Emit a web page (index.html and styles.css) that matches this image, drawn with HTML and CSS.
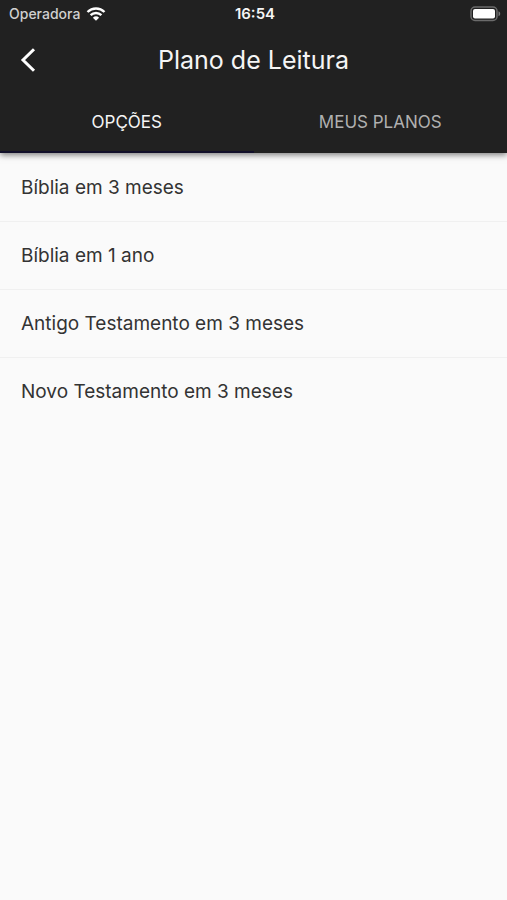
FILE: index.html
```html
<!DOCTYPE html>
<html lang="pt-BR">
<head>
<meta charset="utf-8">
<meta name="viewport" content="width=device-width, initial-scale=1">
<title>Plano de Leitura</title>
<link rel="stylesheet" href="styles.css">
</head>
<body>
<header class="header">
  <div class="status">
    <div class="carrier">
      <span>Operadora</span>
      <svg class="wifi" viewBox="0 0 20 14" aria-hidden="true">
        <path d="M1.500 5a12.200 12.200 0 0 1 17 0M4.600 8.200a7.700 7.700 0 0 1 10.800 0" fill="none" stroke="currentColor" stroke-width="2.400"/>
        <path d="M10 13.800 6.900 10.700a4.500 4.500 0 0 1 6.200 0z" fill="currentColor"/>
      </svg>
    </div>
    <time class="time">16:54</time>
    <svg class="battery" viewBox="0 0 31 16" aria-hidden="true">
      <rect x="1" y="1" width="26" height="13.500" rx="4" fill="none" stroke="#6b6b6b" stroke-width="1.500"/>
      <rect x="3" y="3" width="22" height="9.500" rx="2" fill="#fff"/>
      <path d="M28.500 5.300c2.300.9 2.300 4 0 4.900z" fill="#7a7a7a"/>
    </svg>
  </div>
  <div class="toolbar">
    <button class="back" type="button" aria-label="Voltar">
      <svg viewBox="0 0 16 24" aria-hidden="true"><path d="M14 1.200 3 12l11 10.800" fill="none" stroke="currentColor" stroke-width="3"/></svg>
    </button>
    <h1 class="title">Plano de Leitura</h1>
  </div>
  <nav class="tabs">
    <button class="tab active" type="button">OPÇÕES</button>
    <button class="tab" type="button">MEUS PLANOS</button>
  </nav>
</header>
<main>
  <ul class="plans">
    <li><a href="#">Bíblia em 3 meses</a></li>
    <li><a href="#">Bíblia em 1 ano</a></li>
    <li><a href="#">Antigo Testamento em 3 meses</a></li>
    <li><a href="#">Novo Testamento em 3 meses</a></li>
  </ul>
</main>
</body>
</html>
```
FILE: styles.css
```css
* { box-sizing: border-box; }
body {
  margin: 0;
  min-height: 100vh;
  background: #fafafa;
  color: #333;
  font-family: Inter, sans-serif;
}
.header {
  background: #212121;
  color: #f5f5f5;
  box-shadow: 0 2px 6px rgba(0, 0, 0, 0.5);
}
.status {
  display: grid;
  grid-template-columns: 1fr auto 1fr;
  align-items: center;
  height: 27px;
  padding: 0 6px 0 9px;
  font-size: 15px;
}
.carrier {
  display: flex;
  align-items: center;
  gap: 6px;
  color: #d0d0d0;
  font-size: 14px;
  font-weight: 500;
}
.wifi { width: 20px; height: 14px; color: #fff; }
.time { font-weight: 600; }
.battery { width: 31px; height: 16px; justify-self: end; }
.toolbar {
  display: grid;
  grid-template-columns: 56px 1fr 56px;
  align-items: center;
  height: 65px;
}
.back {
  display: flex;
  justify-content: center;
  padding: 8px;
  border: 0;
  background: none;
  color: #fff;
}
.back svg { width: 16px; height: 24px; }
.title {
  margin: 0;
  font-size: 25px;
  font-weight: 400;
  text-align: center;
}
.tabs { display: grid; grid-template-columns: 1fr 1fr; height: 61px; }
.tab {
  padding: 0;
  border: 0;
  border-bottom: 2px solid transparent;
  background: none;
  color: #b0b0b0;
  font: 400 17px Inter, sans-serif;
}
.tab.active { border-bottom-color: #12102a; color: #f5f5f5; }
.plans { margin: 0; padding: 0; list-style: none; }
.plans li + li { border-top: 1px solid #f0f0f0; }
.plans a {
  display: flex;
  align-items: center;
  min-height: 67px;
  padding: 0 21px;
  color: inherit;
  font-size: 19px;
  text-decoration: none;
}
.plans li:first-child a { min-height: 68px; }
```
